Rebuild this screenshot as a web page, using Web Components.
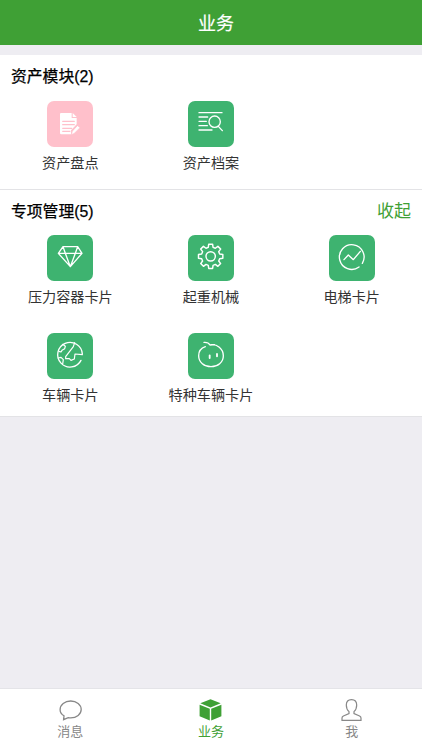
<!DOCTYPE html>
<html lang="zh-CN">
<head>
<meta charset="utf-8">
<title>业务</title>
<style>
html,body{margin:0;height:100%}
body{font-family:"Liberation Sans","Noto Sans CJK SC",sans-serif;background:#eeedf2;overflow:hidden}
</style>
</head>
<body>
<app-screen>
  <app-header slot="top">业务</app-header>
  <module-section heading="资产模块(2)" style="--foot:10px">
    <module-card icon="document" tone="#ffc0cb">资产盘点</module-card>
    <module-card icon="search">资产档案</module-card>
  </module-section>
  <module-section heading="专项管理(5)" action="收起" style="--head:3px;--foot:5px">
    <module-card icon="diamond">压力容器卡片</module-card>
    <module-card icon="gear">起重机械</module-card>
    <module-card icon="chart">电梯卡片</module-card>
    <module-card icon="globe">车辆卡片</module-card>
    <module-card icon="face">特种车辆卡片</module-card>
  </module-section>
  <tab-bar slot="bottom">
    <tab-item icon="chat">消息</tab-item>
    <tab-item icon="cube" active>业务</tab-item>
    <tab-item icon="person">我</tab-item>
  </tab-bar>
</app-screen>
<script>
// Cog outline: eight flat teeth around the centre, joined by straight flanks.
function cog(cx, cy, outer, inner) {
  const pts = [];
  for (let i = 0; i < 8; i++) {
    for (const [da, r] of [[-15, inner], [-9, outer], [9, outer], [15, inner]]) {
      const a = (i * 45 + da) * Math.PI / 180;
      pts.push((cx + r * Math.cos(a)).toFixed(1) + ' ' + (cy + r * Math.sin(a)).toFixed(1));
    }
  }
  return 'M' + pts.join('L') + 'Z';
}
const TILE_ICONS = {
  document: `<path d="M64 57H96V72H111V91L94 109V121H65Q61 121 61 117V60Q61 57 64 57Z" fill="#fff" stroke="none"/><path d="M99 57L111 69H99Z" fill="#fff" stroke="none"/><path d="M69 82H104M69 92H104M69 103H96M69 112H91" stroke="#ffc0cb" stroke-width="3.5"/><path d="M114 95L121 101L104 118L95 122L98 112Z" fill="#fff" stroke="#ffc0cb" stroke-width="2"/>`,
  search: `<path d="M55 56H124M55 69H81M55 82H77M55 95H80M55 108H94"/><circle cx="102" cy="83" r="17"/><path d="M113 97L125 110"/>`,
  diamond: `<path d="M70 56H114L127 76L92 116L56 76ZM56 76H127M70 56L77 76L92 116L107 76L114 56" stroke-width="4"/>`,
  gear: `<path d="${cog(90, 85, 37, 28)}" stroke-width="4.4"/><circle cx="90" cy="85" r="14" stroke-width="4.4"/>`,
  chart: `<path d="M112 117A37 37 0 1 1 122 106M67 95L80 81L95 95L116 70"/>`,
  globe: `<path d="M124 103A37 37 0 1 1 128 84"/><path d="M105 50L101 62L78 92V98H89L94 103L104 99L106 84L128 86M69 55L77 61L75 68L67 73L64 78L58 76M56 96L64 94L71 101L69 114" stroke-width="3.6"/>`,
  face: `<path d="M70 49Q83 48 88 57C109 52 128 69 128 89C128 109 111 122 91 122C71 122 54 109 54 89C54 76 62 66 74 62M88 57L102 56"/><path d="M87 88V96M109 84V91" stroke-width="5.5"/>`
};
const TAB_ICONS = {
  chat: `<path d="M4.6 20.6L5 16.8C2.6 15.4 1.1 13.2 1.1 10.7C1.1 5.8 5.8 2 11.7 2S22.2 5.8 22.2 10.5S17.6 18.8 11.7 18.8Q10.5 18.8 9.2 18.6Z" fill="none" stroke="currentColor" stroke-width="1.3"/>`,
  cube: `<path d="M11.5 .3L21.7 4.3L11.5 8.6L1.3 4.3ZM.6 5.8L10.8 9.8V21.5L.6 17.3ZM22.4 5.8L12.2 9.8V21.5L22.4 17.3Z" fill="currentColor"/>`,
  person: `<path d="M11.5 .6C8 .6 6.3 2.8 6.3 6C6.3 9 7.4 11.2 9 12.6V14.6L3.4 17Q2 17.7 2 19V21.4H21V19Q21 17.7 19.6 17L14 14.6V12.6C15.6 11.2 16.7 9 16.7 6C16.7 2.8 15 .6 11.5 .6Z" fill="none" stroke="currentColor" stroke-width="1.2"/>`
};

class Base extends HTMLElement {
  connectedCallback() {
    if (!this.shadowRoot) this.attachShadow({ mode: 'open' }).innerHTML = this.render();
  }
}
customElements.define('app-screen', class extends Base {
  render() {
    return `<style>:host{display:flex;flex-direction:column;height:750px;background:#eeedf2}
    main{flex:1;padding-top:10px}</style><slot name="top"></slot><main><slot></slot></main><slot name="bottom"></slot>`;
  }
});
customElements.define('app-header', class extends Base {
  render() {
    return `<style>:host{display:flex;box-sizing:border-box;height:45px;padding:2px 0 0 10px;background:#3fa035;color:#fff;align-items:center;justify-content:center;font-size:18px;line-height:26px;-webkit-text-stroke:.2px #fff}</style><slot></slot>`;
  }
});
customElements.define('module-section', class extends Base {
  render() {
    const action = this.getAttribute('action');
    return `<style>:host{display:block;background:#fff;border-bottom:1px solid #e3e3e6}
    header{display:flex;box-sizing:border-box;justify-content:space-between;align-items:center;height:42px;padding:2px 11px 0}
    h2{margin:0;font-size:15.8px;line-height:24px;font-weight:400;color:#000;-webkit-text-stroke:.25px #000}
    span{font-size:17px;line-height:24px;color:#3fa035}
    .grid{display:grid;grid-template-columns:repeat(3,1fr);row-gap:20px;padding:var(--head,4px) 0 var(--foot,10px)}</style>
    <header><h2>${this.getAttribute('heading')}</h2>${action ? `<span>${action}</span>` : ''}</header>
    <div class="grid"><slot></slot></div>`;
  }
});
customElements.define('module-card', class extends Base {
  render() {
    return `<style>:host{display:flex;flex-direction:column;align-items:center;height:78px;font-size:14.15px;line-height:20px;color:#333;white-space:nowrap}
    .tile{width:46px;height:46px;border-radius:7px;background:${this.getAttribute('tone') || '#3eb370'};margin-bottom:6px}
    svg{display:block}</style>
    <div class="tile"><svg width="46" height="46" viewBox="22 21 138 138" fill="none" stroke="#fff" stroke-width="4" stroke-linecap="round" stroke-linejoin="round">${TILE_ICONS[this.getAttribute('icon')]}</svg></div>
    <div><slot></slot></div>`;
  }
});
customElements.define('tab-bar', class extends Base {
  render() {
    return `<style>:host{display:grid;grid-template-columns:repeat(3,1fr);height:61px;border-top:1px solid #e4e4e8;background:#fff}</style><slot></slot>`;
  }
});
customElements.define('tab-item', class extends Base {
  render() {
    return `<style>:host{display:flex;flex-direction:column;align-items:center;padding-top:10px;color:#888;font-size:13px;line-height:20px}
    :host([active]){color:#3fa035}svg{display:block}</style>
    <svg width="23" height="23" viewBox="0 0 23 23">${TAB_ICONS[this.getAttribute('icon')]}</svg><div><slot></slot></div>`;
  }
});
</script>
</body>
</html>
